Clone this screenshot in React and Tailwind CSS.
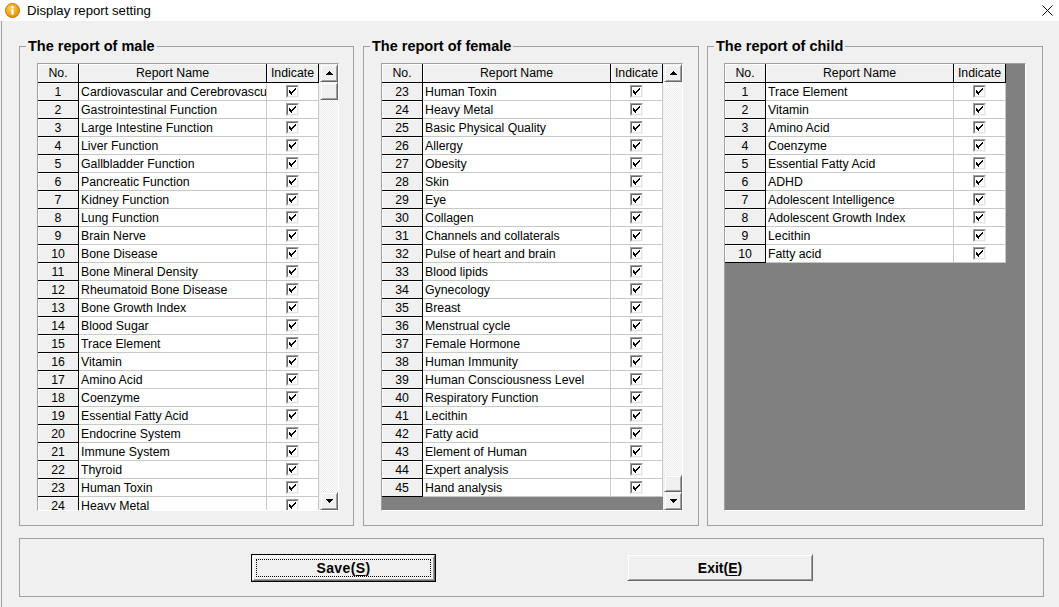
import React from 'react'

const maleItems = [
  'Cardiovascular and Cerebrovascular',
  'Gastrointestinal Function',
  'Large Intestine Function',
  'Liver Function',
  'Gallbladder Function',
  'Pancreatic Function',
  'Kidney Function',
  'Lung Function',
  'Brain Nerve',
  'Bone Disease',
  'Bone Mineral Density',
  'Rheumatoid Bone Disease',
  'Bone Growth Index',
  'Blood Sugar',
  'Trace Element',
  'Vitamin',
  'Amino Acid',
  'Coenzyme',
  'Essential Fatty Acid',
  'Endocrine System',
  'Immune System',
  'Thyroid',
  'Human Toxin',
  'Heavy Metal',
  'Basic Physical Quality',
  'Allergy',
]

// female grid is scrolled: rows 23..45 are the visible part
const femaleItems = [
  'Human Toxin',
  'Heavy Metal',
  'Basic Physical Quality',
  'Allergy',
  'Obesity',
  'Skin',
  'Eye',
  'Collagen',
  'Channels and collaterals',
  'Pulse of heart and brain',
  'Blood lipids',
  'Gynecology',
  'Breast',
  'Menstrual cycle',
  'Female Hormone',
  'Human Immunity',
  'Human Consciousness Level',
  'Respiratory Function',
  'Lecithin',
  'Fatty acid',
  'Element of Human',
  'Expert analysis',
  'Hand analysis',
]

const childItems = [
  'Trace Element',
  'Vitamin',
  'Amino Acid',
  'Coenzyme',
  'Essential Fatty Acid',
  'ADHD',
  'Adolescent Intelligence',
  'Adolescent Growth Index',
  'Lecithin',
  'Fatty acid',
]

const raised =
  'border border-t-[#f0f0f0] border-l-[#f0f0f0] border-b-[#696969] border-r-[#696969] bg-[#f0f0f0] shadow-[inset_1px_1px_0_#fff,inset_-1px_-1px_0_#a0a0a0]'

function CheckBox() {
  return (
    <span className="flex h-[13px] w-[13px] border border-t-[#a0a0a0] border-l-[#a0a0a0] border-b-[#f4f4f4] border-r-[#f4f4f4]">
      <span className="flex h-[11px] w-[11px] items-center justify-center border border-t-[#696969] border-l-[#696969] border-b-[#e3e3e3] border-r-[#e3e3e3] bg-white">
        <svg width="7" height="7" viewBox="0 0 7 7" shapeRendering="crispEdges">
          <path
            d="M0 2h1v1h1v1h1V3h1V2h1V1h1V0h1v2h-1v1h-1v1h-1v1h-1v1H3v1H2V6H1V5H0z"
            fill="#000"
          />
        </svg>
      </span>
    </span>
  )
}

function Arrow({ dir }) {
  return (
    <svg width="7" height="4" viewBox="0 0 7 4" shapeRendering="crispEdges">
      <polygon points={dir === 'up' ? '0,4 3.5,0 7,4' : '0,0 7,0 3.5,4'} fill="#000" />
    </svg>
  )
}

function ScrollBar({ thumbAtEnd }) {
  return (
    <div className="flex w-[19px] flex-col border-l border-[#f0f0f0] bg-[image:repeating-conic-gradient(#fff_0_25%,#ececec_0_50%)] bg-[length:2px_2px]">
      <div className={`flex h-[18px] items-center justify-center ${raised}`}>
        <Arrow dir="up" />
      </div>
      {!thumbAtEnd && <div className={`h-[18px] ${raised}`} />}
      <div className="flex-1" />
      {thumbAtEnd && <div className={`h-[17px] ${raised}`} />}
      <div className={`flex h-[18px] items-center justify-center ${raised}`}>
        <Arrow dir="down" />
      </div>
    </div>
  )
}

function ReportGrid({ items, start = 1, scroll }) {
  return (
    <div className="flex h-[448px] w-[302px] border border-t-[#a0a0a0] border-l-[#a0a0a0] border-b-white border-r-white bg-[#808080]">
      <div className="flex w-[281px] flex-col overflow-hidden">
        <div className="flex h-[19px] flex-none text-[12.3px] leading-[19px] text-black">
          <div className="w-[41px] border-r border-b border-black bg-[#f0f0f0] text-center shadow-[inset_1px_1px_0_#fff]">
            No.
          </div>
          <div className="w-[188px] border-r border-b border-black bg-[#f0f0f0] text-center shadow-[inset_1px_1px_0_#fff]">
            Report Name
          </div>
          <div className="w-[52px] border-r border-b border-black bg-[#f0f0f0] text-center shadow-[inset_1px_1px_0_#fff]">
            Indicate
          </div>
        </div>
        {items.map((name, i) => (
          <div key={i} className="flex h-[18px] flex-none text-[12.3px] leading-[18px] text-black">
            <div className="w-[41px] overflow-hidden border-r border-b border-black bg-[#f0f0f0] text-center shadow-[inset_1px_1px_0_#fff]">
              {start + i}
            </div>
            <div className="w-[188px] overflow-hidden whitespace-nowrap border-r border-b border-[#c8c8c8] bg-white pl-[2px]">
              {name}
            </div>
            <div className="flex w-[52px] items-center justify-center border-r border-b border-[#c8c8c8] bg-white">
              <CheckBox />
            </div>
          </div>
        ))}
      </div>
      {scroll ? <ScrollBar thumbAtEnd={scroll === 'end'} /> : <div className="flex-1" />}
    </div>
  )
}

function Group({ title, width, pad, className = '', children }) {
  return (
    <fieldset className={`h-[488px] min-w-0 ${width} border border-[#a0a0a0] ${className}`}>
      <legend className="ml-[6px] px-[2px] text-[14.5px] font-bold leading-[16px] text-black">
        {title}
      </legend>
      <div className={`${pad} pt-[9px]`}>{children}</div>
    </fieldset>
  )
}

function WinButton({ before, hotkey, after, focused }) {
  const text = (
    <span className="text-[14px] font-bold leading-none text-black">
      {before}
      <span className="underline underline-offset-2">{hotkey}</span>
      {after}
    </span>
  )
  if (focused) {
    return (
      <button type="button" className="h-[28px] w-[185px] border border-black p-0">
        <div className={`flex h-full w-full items-center justify-center p-[3px] ${raised}`}>
          <div className="flex h-full w-full items-center justify-center border border-dotted border-black tracking-[0.4px]">
            {text}
          </div>
        </div>
      </button>
    )
  }
  return (
    <button type="button" className={`flex h-[27px] w-[186px] items-center justify-center ${raised}`}>
      {text}
    </button>
  )
}

export default function App() {
  return (
    <div className="h-[607px] w-[1059px] overflow-hidden bg-[#f0f0f0] font-['Liberation_Sans',Arial,sans-serif]">
      <div className="flex h-[21px] items-center bg-white pl-[5px]">
        <svg width="15" height="15" viewBox="0 0 15 15">
          <defs>
            <radialGradient id="ig" cx="0.4" cy="0.35" r="0.7">
              <stop offset="0" stopColor="#ffd25a" />
              <stop offset="1" stopColor="#e58a00" />
            </radialGradient>
          </defs>
          <circle cx="7.5" cy="7.5" r="7" fill="url(#ig)" stroke="#c47400" strokeWidth="1" />
          <circle cx="7.5" cy="4.2" r="1.3" fill="#fff" />
          <rect x="6.4" y="6.3" width="2.2" height="5.5" rx="0.5" fill="#fff" />
        </svg>
        <span className="ml-[7px] text-[13.2px] text-black">Display report setting</span>
        <svg className="ml-auto mr-[6px]" width="11" height="11" viewBox="0 0 11 11">
          <path d="M0.5 0.5L10.5 10.5M10.5 0.5L0.5 10.5" stroke="#000" strokeWidth="1" />
        </svg>
      </div>

      <div className="ml-px h-[586px] border-l border-[#a0a0a0] pl-[17px]">
        <div className="flex pt-[17px]">
          <Group title="The report of male" width="w-[335px]" pad="pl-[17px] pr-[14px]">
            <ReportGrid items={maleItems} scroll="top" />
          </Group>
          <Group title="The report of female" width="w-[336px]" pad="pl-[17px] pr-[15px]" className="ml-[9px]">
            <ReportGrid items={femaleItems} start={23} scroll="end" />
          </Group>
          <Group title="The report of child" width="w-[336px]" pad="pl-[16px] pr-[16px]" className="ml-[8px]">
            <ReportGrid items={childItems} />
          </Group>
        </div>

        <div className="mt-[12px] flex h-[59px] w-[1025px] items-start gap-[191px] border border-[#a0a0a0] pl-[231px] pt-[15px]">
          <WinButton before="Save(" hotkey="S" after=")" focused />
          <WinButton before="Exit(" hotkey="E" after=")" />
        </div>
      </div>
    </div>
  )
}
